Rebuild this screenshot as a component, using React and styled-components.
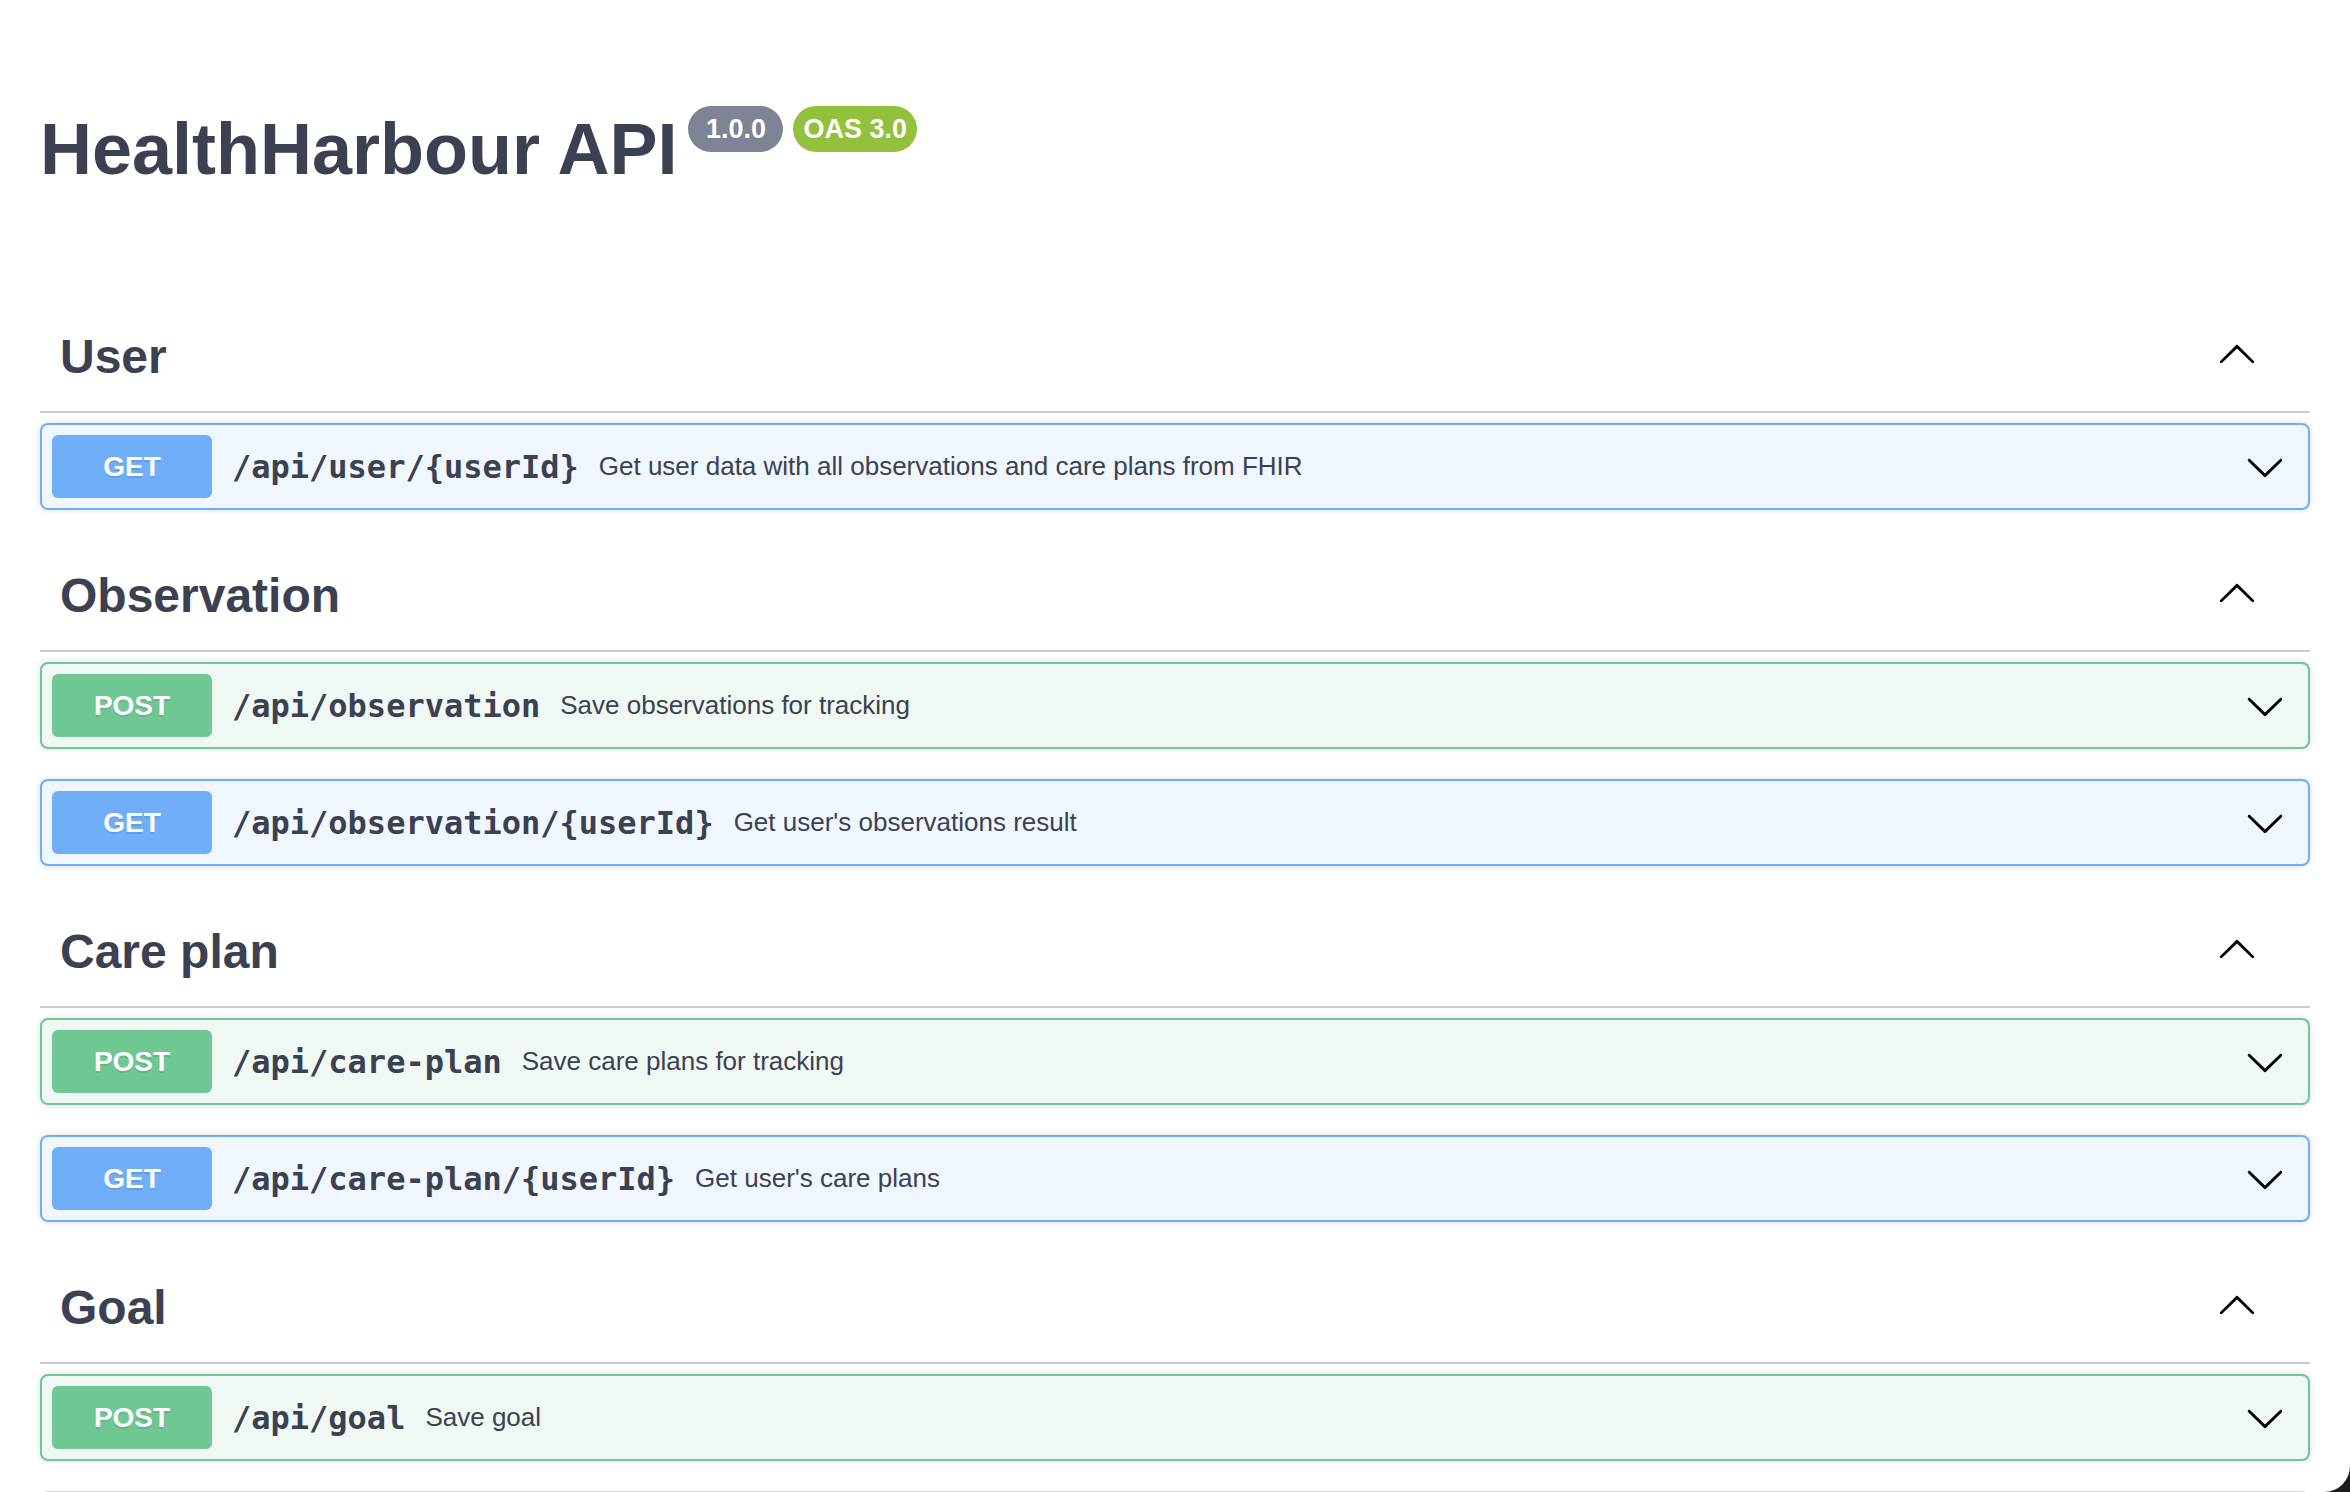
import React from "react";
import styled, { createGlobalStyle } from "styled-components";

const GlobalStyle = createGlobalStyle`
    html {
        background: #1c1c1e;
    }
    body {
        margin: 0;
        font-family: "Liberation Sans", Arial, sans-serif;
        color: #3b4151;
    }
`;

const methods = {
    get: { color: "#71aef9", bg: "#eff6fe" },
    post: { color: "#6fc794", bg: "#eff8f3" },
};

const tags = [
    {
        name: "User",
        ops: [
            {
                method: "get",
                path: "/api/user/{userId}",
                summary: "Get user data with all observations and care plans from FHIR",
            },
        ],
    },
    {
        name: "Observation",
        ops: [
            { method: "post", path: "/api/observation", summary: "Save observations for tracking" },
            { method: "get", path: "/api/observation/{userId}", summary: "Get user's observations result" },
        ],
    },
    {
        name: "Care plan",
        ops: [
            { method: "post", path: "/api/care-plan", summary: "Save care plans for tracking" },
            { method: "get", path: "/api/care-plan/{userId}", summary: "Get user's care plans" },
        ],
    },
    {
        name: "Goal",
        ops: [{ method: "post", path: "/api/goal", summary: "Save goal" }],
    },
];

function ArrowUp() {
    return (
        <svg width="40" height="40" viewBox="0 0 20 20" aria-hidden="true">
            <path d="M17.418 14.908c.272.268.709.268.979 0s.271-.701 0-.969l-7.908-7.83c-.27-.268-.707-.268-.979 0l-7.908 7.83c-.27.268-.27.701 0 .969.271.268.709.268.979 0L10 7.767l7.418 7.141z" />
        </svg>
    );
}

function ArrowDown() {
    return (
        <svg width="40" height="40" viewBox="0 0 20 20" aria-hidden="true">
            <path d="M17.418 6.109c.272-.268.709-.268.979 0s.271.701 0 .969l-7.908 7.83c-.27.268-.707.268-.979 0l-7.908-7.83c-.27-.268-.27-.701 0-.969.271-.268.709-.268.979 0L10 13.25l7.418-7.141z" />
        </svg>
    );
}

function Operation({ method, path, summary }) {
    return (
        <Opblock $method={method}>
            <MethodBadge $method={method}>{method.toUpperCase()}</MethodBadge>
            <Path>{path}</Path>
            <Summary>{summary}</Summary>
            <ArrowButton $down>
                <ArrowDown />
            </ArrowButton>
        </Opblock>
    );
}

export default function App() {
    return (
        <Frame>
            <GlobalStyle />
            <Wrapper>
                <TitleRow>
                    <Title>HealthHarbour API</Title>
                    <Stamp>{" 1.0.0 "}</Stamp>
                    <Stamp $oas>OAS 3.0</Stamp>
                </TitleRow>
                <TagList>
                    {tags.map((tag) => (
                        <section key={tag.name}>
                            <TagHeader>
                                <TagName>{tag.name}</TagName>
                                <ArrowButton>
                                    <ArrowUp />
                                </ArrowButton>
                            </TagHeader>
                            {tag.ops.map((op) => (
                                <Operation key={op.method + op.path} {...op} />
                            ))}
                        </section>
                    ))}
                    <Models />
                </TagList>
            </Wrapper>
        </Frame>
    );
}

const Frame = styled.div`
    height: 100vh;
    overflow: hidden;
    background: #fff;
    border-bottom-right-radius: 26px;
`;

const Wrapper = styled.div`
    padding: 106px 40px 0;
`;

const TitleRow = styled.div`
    display: flex;
    align-items: flex-start;
`;

const Title = styled.h2`
    margin: 7px 0 0;
    font-size: 72px;
    line-height: 72px;
    font-weight: 700;
    color: #3b4151;
`;

const Stamp = styled.pre`
    margin: 0 0 0 ${(p) => (p.$oas ? "10px" : "11px")};
    padding: 8px 10px;
    border-radius: 60px;
    background: ${(p) => (p.$oas ? "#93c13c" : "#7e8493")};
    color: #fff;
    font-family: "Liberation Sans", Arial, sans-serif;
    font-size: 27px;
    line-height: 30px;
    font-weight: 700;
    white-space: pre;
`;

const TagList = styled.div`
    margin-top: 116px;
`;

const TagHeader = styled.div`
    display: flex;
    align-items: center;
    box-sizing: border-box;
    height: 112px;
    padding: 0 40px 0 20px;
    margin-bottom: 10px;
    border-bottom: 2px solid #c9c9ce;
`;

const TagName = styled.h3`
    flex: 1;
    margin: 0;
    font-size: 48px;
    font-weight: 700;
    color: #3b4151;
`;

const ArrowButton = styled.button`
    display: flex;
    align-items: center;
    justify-content: center;
    width: 40px;
    height: 40px;
    padding: 0;
    margin: ${(p) => (p.$down ? "0 13px 0 0" : "0 13px 6px 0")};
    border: none;
    background: none;
    fill: #000;
`;

const Opblock = styled.div`
    display: flex;
    align-items: center;
    padding: 10px;
    margin-bottom: 30px;
    border: 2px solid ${(p) => methods[p.$method].color};
    border-radius: 8px;
    background: ${(p) => methods[p.$method].bg};
    box-shadow: 0 0 6px rgba(0, 0, 0, 0.14);
`;

const MethodBadge = styled.span`
    display: flex;
    align-items: center;
    justify-content: center;
    width: 160px;
    height: 63px;
    border-radius: 6px;
    background: ${(p) => methods[p.$method].color};
    color: #fff;
    font-size: 28px;
    font-weight: 700;
    text-shadow: 0 2px 0 rgba(0, 0, 0, 0.1);
`;

const Path = styled.span`
    padding: 0 20px;
    font-family: "DejaVu Sans Mono", "Liberation Mono", monospace;
    font-size: 32px;
    font-weight: 700;
    color: #3b4151;
`;

const Summary = styled.span`
    flex: 1;
    font-size: 26px;
    color: #3b4151;
`;

const Models = styled.section`
    height: 120px;
    margin: 0 0 60px;
    border: 2px solid rgba(59, 65, 81, 0.2);
    border-radius: 8px;
`;
